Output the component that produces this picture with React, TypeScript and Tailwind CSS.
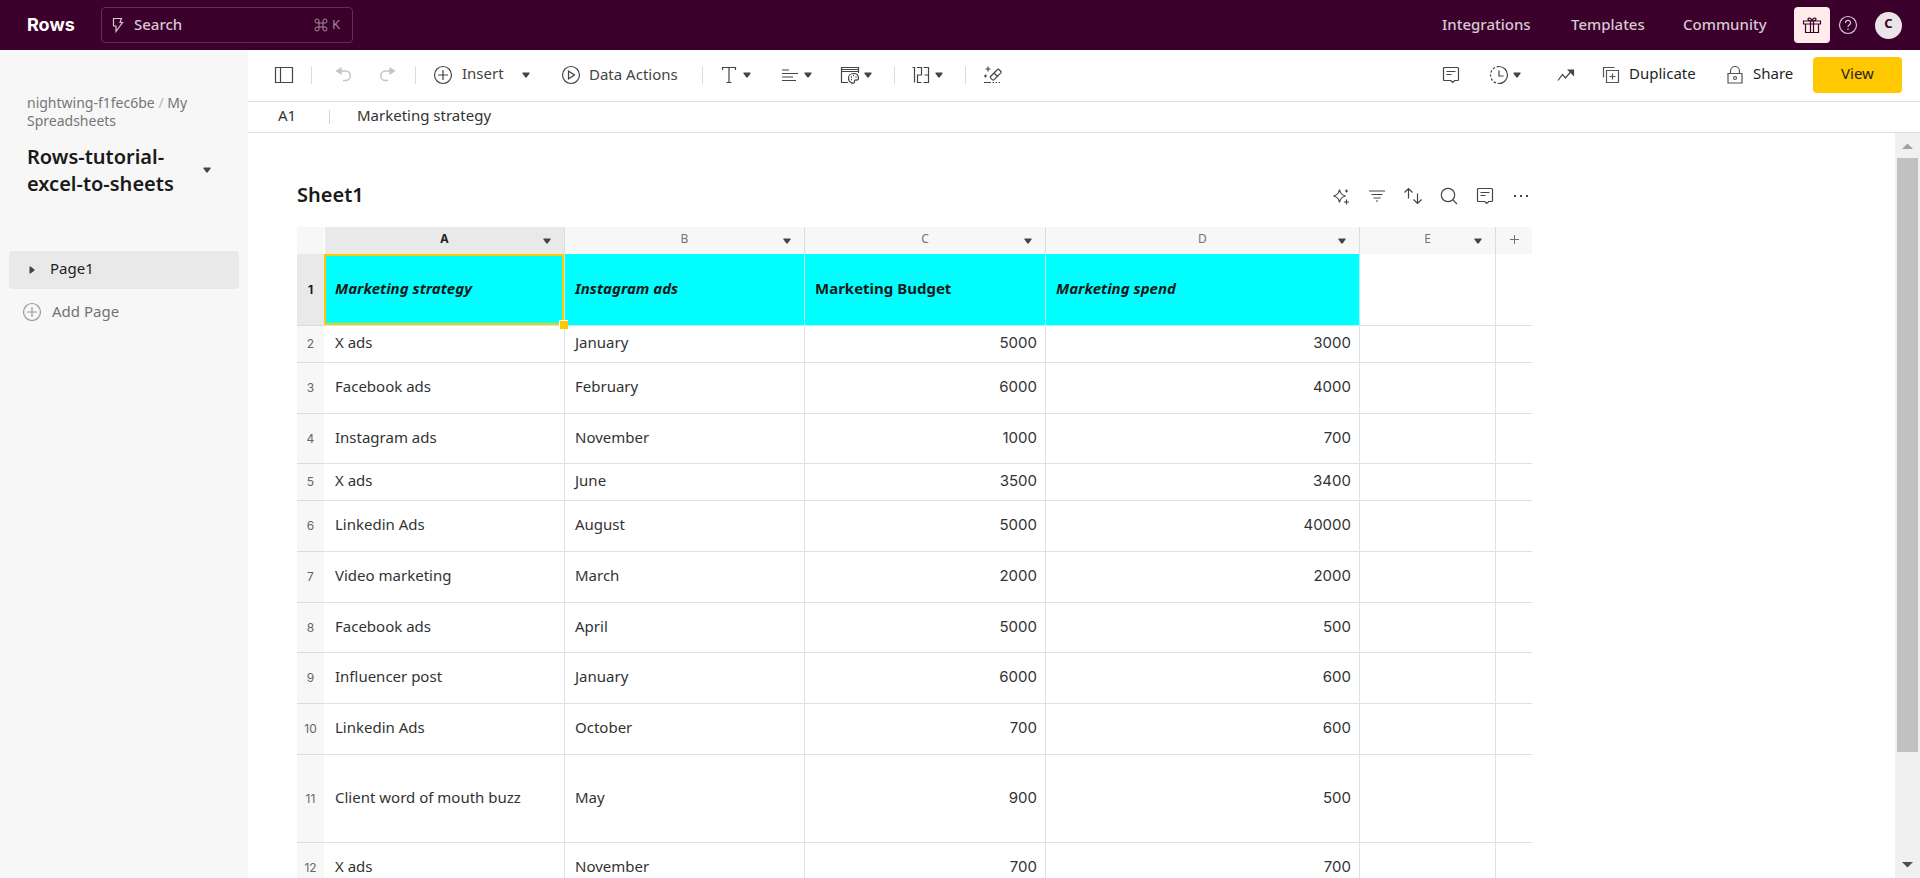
import type { ReactNode } from "react";
import clsx from "clsx";

type Row = {
  height: string;
  cells: [string, string, string, string];
};

const rows: Row[] = [
  { height: "h-[37px]", cells: ["X ads", "January", "5000", "3000"] },
  { height: "h-[51px]", cells: ["Facebook ads", "February", "6000", "4000"] },
  { height: "h-[50px]", cells: ["Instagram ads", "November", "1000", "700"] },
  { height: "h-[37px]", cells: ["X ads", "June", "3500", "3400"] },
  { height: "h-[51px]", cells: ["Linkedin Ads", "August", "5000", "40000"] },
  { height: "h-[51px]", cells: ["Video marketing", "March", "2000", "2000"] },
  { height: "h-[50px]", cells: ["Facebook ads", "April", "5000", "500"] },
  { height: "h-[51px]", cells: ["Influencer post", "January", "6000", "600"] },
  { height: "h-[51px]", cells: ["Linkedin Ads", "October", "700", "600"] },
  {
    height: "h-[88px]",
    cells: ["Client word of mouth buzz", "May", "900", "500"],
  },
  { height: "h-[50px]", cells: ["X ads", "November", "700", "700"] },
];

const columns = ["A", "B", "C", "D", "E"];

function Icon({
  children,
  className,
}: {
  children: ReactNode;
  className?: string;
}) {
  return (
    <svg
      width="20"
      height="20"
      viewBox="0 0 20 20"
      fill="none"
      stroke="currentColor"
      strokeWidth="1.2"
      className={clsx("shrink-0", className)}
      aria-hidden="true"
    >
      {children}
    </svg>
  );
}

function Caret({ className }: { className?: string }) {
  return (
    <svg
      width="8"
      height="6"
      viewBox="0 0 8 6"
      fill="currentColor"
      className={clsx("shrink-0", className)}
      aria-hidden="true"
    >
      <path d="M.5.5h7v1L4.6 5.5H3.4L.5 1.5z" />
    </svg>
  );
}

function PlusCircle({ className }: { className?: string }) {
  return (
    <Icon className={className}>
      <circle cx="10" cy="10" r="8.5" />
      <path d="M10 5v10M5 10h10" />
    </Icon>
  );
}

function CommentIcon() {
  return (
    <Icon>
      <path d="M3.5 2.5h13q1 0 1 1v11q0 1-1 1h-2.8l-2 2-2-2H3.5q-1 0-1-1v-11q0-1 1-1z" />
      <path d="M5.5 6.5h9M5.5 9.5h5" />
    </Icon>
  );
}

function Separator({ className }: { className?: string }) {
  return (
    <div className={clsx("flex shrink-0 justify-center", className)}>
      <span className="h-[18px] w-px bg-[#dcdcdc]" />
    </div>
  );
}

function MenuButton({
  label,
  className,
  children,
}: {
  label: string;
  className: string;
  children: ReactNode;
}) {
  return (
    <button
      aria-label={label}
      className={clsx("flex h-9 shrink-0 items-center gap-1", className)}
    >
      {children}
      <Caret />
    </button>
  );
}

function TopBar() {
  return (
    <header className="flex h-[50px] shrink-0 items-center bg-[#3b002b] pr-[18px] pl-[27px] text-[#d5c8d1]">
      <a
        href="#"
        className="w-[74px] pb-[2px] font-[Inter] text-[18px] font-bold text-white"
      >
        Rows
      </a>
      <label className="flex h-9 w-[252px] items-center rounded-[4px] border border-[#5f3055] pr-3 pl-[6px]">
        <Icon>
          <path d="M5.500 3.500h8l-1.500 4h2.500L8 16.500V11H5.500z" />
        </Icon>
        <input
          type="text"
          placeholder="Search"
          aria-label="Search"
          className="ml-[6px] w-0 flex-1 pb-[2px] text-[15px] font-medium outline-none placeholder:text-[#d5c8d1] placeholder:opacity-100"
        />
        <span className="flex items-center gap-1 pb-px text-[13px] text-[#a3899c]">
          <svg
            width="14"
            height="14"
            viewBox="0 0 14 14"
            fill="none"
            stroke="currentColor"
            aria-hidden="true"
          >
            <path d="M5 5V3a2 2 0 1 0-2 2h8a2 2 0 1 0-2-2v8a2 2 0 1 0 2-2H3a2 2 0 1 0 2 2z" />
          </svg>
          K
        </span>
      </label>

      <nav className="ml-auto flex items-center pb-[2px] text-[15px] font-medium">
        <a href="#" className="w-[129px]">
          Integrations
        </a>
        <a href="#" className="w-28">
          Templates
        </a>
        <a href="#" className="w-[111px]">
          Community
        </a>
      </nav>
      <button
        aria-label="Rewards"
        className="flex size-9 items-center justify-center rounded-[4px] bg-[#ffeceb] text-[#3b002b]"
      >
        <Icon>
          <path d="M1.500 6h17v3h-17zM3.500 9v8.500h13V9M8.500 6v11.500M11.500 6v11.500M10 6C8 6 6 5.500 6 4s3-1.500 4 1.500c1-3 4-3 4-1.500s-2 2-4 2z" />
        </Icon>
      </button>
      <button aria-label="Help" className="ml-2">
        <Icon>
          <circle cx="10" cy="10" r="8.5" />
          <path d="M7.500 8a2.500 2.500 0 1 1 3.700 2.100Q10 10.800 10 12M10 13.500v1.500" />
        </Icon>
      </button>
      <button
        aria-label="Account"
        className="ml-[17px] size-[27px] rounded-full bg-[#ebe5ea] pb-[2px] text-[13px] font-bold text-[#3b002b]"
      >
        C
      </button>
    </header>
  );
}

function Sidebar() {
  return (
    <aside className="w-[248px] shrink-0 bg-[#f7f7f7] pt-[44px]">
      <div className="px-[27px] text-[14px] leading-[18px] text-[#767676]">
        <a href="#">nightwing-f1fec6be</a>
        <span className="text-[#b8b8b8]"> / </span>
        <a href="#">My Spreadsheets</a>
      </div>
      <button className="mt-[13px] flex w-full items-center pr-[37px] pl-[27px] text-left text-[#1a1a1a]">
        <h1 className="flex-1 text-[20px] leading-[27px] font-semibold">
          Rows-tutorial-
          <br />
          excel-to-sheets
        </h1>
        <Caret className="text-[#444]" />
      </button>
      <nav className="mt-[54px] px-[9px] text-[15px]">
        <a
          href="#"
          className="flex h-[38px] items-center rounded-[4px] bg-[#e9e9e9] pl-5 text-[#1f1f1f]"
        >
          <svg
            width="6"
            height="8"
            viewBox="0 0 6 8"
            fill="#444"
            className="mr-[15px]"
            aria-hidden="true"
          >
            <path d="M.5.5h1l4 3v1l-4 3h-1z" />
          </svg>
          <span className="pb-[3px]">Page1</span>
        </a>
        <button className="mt-1 flex h-[38px] items-center gap-[10px] pl-[13px] text-[#737373]">
          <PlusCircle className="text-[#999]" />
          <span className="pb-[2px]">Add Page</span>
        </button>
      </nav>
    </aside>
  );
}

function Toolbar() {
  return (
    <div className="flex h-[52px] shrink-0 items-center border-b border-[#dedede] pr-[18px] pb-[2px] pl-4 text-[15px] text-[#444]">
      <button aria-label="Toggle sidebar" className="flex w-10 justify-center">
        <Icon>
          <path d="M1.500 2.500h17v15h-17zM6.500 2.500v15" />
        </Icon>
      </button>
      <Separator className="w-[15px]" />
      <button
        aria-label="Undo"
        className="flex w-12 justify-center text-[#c4c4c4]"
      >
        <Icon>
          <path d="M5 6h7.500a4.500 4.500 0 0 1 0 9.500H10" strokeWidth="1.5" />
          <path d="M8 3v6L3.500 6z" fill="currentColor" />
        </Icon>
      </button>
      <button
        aria-label="Redo"
        className="flex w-[42px] justify-center text-[#c4c4c4]"
      >
        <Icon>
          <path d="M15 6H7.500a4.500 4.500 0 0 0 0 9.500H10" strokeWidth="1.5" />
          <path d="M12 3v6l4.500-3z" fill="currentColor" />
        </Icon>
      </button>
      <Separator className="w-3" />
      <button className="flex h-9 w-[127px] items-center gap-[9px] pr-[18px] pl-3">
        <PlusCircle />
        <span className="pb-[2px]">Insert</span>
        <Caret className="ml-auto" />
      </button>
      <button className="flex h-9 w-[146px] items-center gap-2 pl-[13px] whitespace-nowrap">
        <Icon>
          <circle cx="10" cy="10" r="8.5" />
          <path d="M7.500 6.200v7.600l6-3.800z" />
        </Icon>
        Data Actions
      </button>
      <Separator className="w-4" />
      <MenuButton label="Text style" className="w-[61px] pl-[9px]">
        <Icon>
          <path d="M3.500 5V2.500h13V5M10 2.500v15M7.500 17.500h5" />
        </Icon>
      </MenuButton>
      <MenuButton label="Alignment" className="w-[60px] pl-[9px]">
        <Icon>
          <path d="M2 5h7M2 8.500h16M2 12h11M2 15.500h14" />
        </Icon>
      </MenuButton>
      <MenuButton label="Cell style" className="w-[55px] pl-[9px]">
        <Icon>
          <path d="M8 17.500H1.500v-15h17V8M1.500 4.500h17M1.500 6.500h17" />
          <path d="M13.500 8.500c3 0 5 2 5 4.700 0 2-2 2-3.200 2-1.300 0-.8 1.200-.8 2.300-1 1.400-6 .3-6-4 0-3 2.200-5 5-5z" />
          <path d="M11 12h1M13 10.500h1M15.500 12h1M11 14.500h1" strokeWidth="1.4" />
        </Icon>
      </MenuButton>
      <Separator className="w-4" />
      <MenuButton label="Number format" className="w-[55px] pl-[9px]">
        <Icon>
          <path d="M1.500 2.500h2v15M6 2.500h4.500V10H6.500v7.500h4M12.500 2.500h5v15h-5M13.500 10h4" />
        </Icon>
      </MenuButton>
      <Separator className="w-4" />
      <button aria-label="Clear format" className="flex w-10 justify-center">
        <Icon>
          <path d="M7.500 11.500l7-7q.7-.6 1.400 0l2 2q.6.700 0 1.400l-7 7q-.7.600-1.400 0l-2-2q-.6-.7 0-1.400zM11 8l3.500 3.500" />
          <path d="M5 1.500v5M2.500 4h5M2.500 9.500v3M1 11h3M1 17.500h7M9.500 17.500H11M12.500 17.500H14M15.500 17.500H17" />
        </Icon>
      </button>

      <button aria-label="Comments" className="ml-auto flex w-12">
        <CommentIcon />
      </button>
      <MenuButton label="History" className="w-[67px]">
        <Icon>
          <path d="M10 1.500a8.500 8.500 0 0 1 0 17" />
          <path
            d="M10 1.500a8.500 8.500 0 0 0 0 17"
            strokeDasharray="2.4 1.8"
          />
          <path d="M10 5.500V11h4.500" />
        </Icon>
      </MenuButton>
      <button aria-label="Insights" className="flex w-[45px]">
        <Icon>
          <path d="M2 15.500l4.500-6 3 3.500L15 6.500" />
          <path d="M12.500 5h5v5z" fill="currentColor" />
        </Icon>
      </button>
      <button className="flex h-9 w-[124px] items-center gap-2 text-[#1f1f1f]">
        <Icon className="text-[#555]">
          <path d="M5.500 5.500h12v12h-12zM2.500 12.500v-10h11M11.500 8.500v6M8.500 11.500h6" />
        </Icon>
        <span className="pb-[2px]">Duplicate</span>
      </button>
      <button className="flex h-9 w-[88px] items-center gap-2 text-[#1f1f1f]">
        <Icon className="text-[#555]">
          <path d="M3 8.500h14v9.500H3zM5.500 8.500V6a4.500 4.500 0 0 1 9 0v2.500" />
          <circle cx="10" cy="13" r="1.5" />
        </Icon>
        <span className="pb-[2px]">Share</span>
      </button>
      <button className="h-9 w-[89px] rounded-[4px] bg-[#ffc800] pb-[2px] text-[#1f1f1f]">
        View
      </button>
    </div>
  );
}

function FormulaBar() {
  return (
    <div className="flex h-[31px] shrink-0 items-center border-b border-[#dedede] pl-[30px] text-[15px] text-[#333]">
      <span className="w-[51px] pb-[3px]">A1</span>
      <span className="h-[14px] w-px bg-[#d4d4d4]" />
      <input
        type="text"
        aria-label="Cell value"
        defaultValue="Marketing strategy"
        className="ml-[27px] min-w-0 flex-1 pb-[3px] outline-none"
      />
    </div>
  );
}

function SheetActions() {
  const button = "flex w-9 justify-center";
  return (
    <div className="flex pt-[2px] text-[#444]">
      <button aria-label="AI analyst" className={button}>
        <Icon>
          <path d="M8.500 3.500q.8 5.200 6 6.500-5.200 1.300-6 6.500-.8-5.200-6-6.500 5.200-1.300 6-6.500z" />
          <path d="M15.500 3.500v3M14 5h3M15.500 13.500v5M13 16h5" />
        </Icon>
      </button>
      <button aria-label="Filter" className={button}>
        <Icon>
          <path d="M2 5h16M4.500 8.500h11M6.500 12h7M9 15h2" />
        </Icon>
      </button>
      <button aria-label="Sort" className={button}>
        <Icon>
          <path d="M5.500 12.500V2.500M1.500 6.500l4-4 4 4M14.500 7.500v10M10.500 13.500l4 4 4-4" />
        </Icon>
      </button>
      <button aria-label="Search sheet" className={button}>
        <Icon>
          <circle cx="9" cy="9" r="6.7" />
          <path d="M13.800 13.800L18 18" />
        </Icon>
      </button>
      <button aria-label="Comment" className={button}>
        <CommentIcon />
      </button>
      <button aria-label="More" className={button}>
        <Icon>
          <path d="M3 10h2M9 10h2M15 10h2" strokeWidth="2" />
        </Icon>
      </button>
    </div>
  );
}

function SheetTable() {
  const line = "border-r border-b border-[#e0e0e0]";
  const cyan =
    "relative border-r border-b border-r-[#b5f0f0] border-b-[#b5f0f0] bg-[#00ffff] pt-0 pr-2 pb-[2px] pl-[10px] text-left font-bold";

  return (
    <table className="w-[1235px] table-fixed border-separate border-spacing-0 text-[15px] text-[#333]">
      <colgroup>
        <col className="w-7" />
        <col className="w-[240px]" />
        <col className="w-[240px]" />
        <col className="w-[241px]" />
        <col className="w-[314px]" />
        <col className="w-[136px]" />
        <col className="w-9" />
      </colgroup>
      <thead>
        <tr className="h-[27px] bg-[#f7f7f7] text-[12px] text-[#737373]">
          <td className="border-r border-white" />
          {columns.map((name) => (
            <th
              key={name}
              scope="col"
              className={clsx(
                "border-r border-[#dcdcdc] p-0",
                name === "A"
                  ? "bg-[#e9e9e9] font-bold text-[#1f1f1f]"
                  : "font-normal",
              )}
            >
              <button className="flex w-full items-center pr-[13px] pl-[21px]">
                <span className="flex-1 pb-[3px]">{name}</span>
                <Caret className="text-[#444]" />
              </button>
            </th>
          ))}
          <td className="p-0 pb-[2px]">
            <button
              aria-label="Add column"
              className="flex w-full justify-center"
            >
              <svg
                width="9"
                height="9"
                viewBox="0 0 9 9"
                stroke="currentColor"
                aria-hidden="true"
              >
                <path d="M4.500 0v9M0 4.500h9" />
              </svg>
            </button>
          </td>
        </tr>
      </thead>
      <tbody>
        <tr className="h-[72px] text-[#1a1a1a]">
          <th
            scope="row"
            className="border-r border-b border-r-white border-b-[#dcdcdc] bg-[#e9e9e9] p-0 font-[Inter] text-[12px] font-bold"
          >
            1
          </th>
          <td className={clsx(cyan, "italic")}>
            Marketing strategy
            <span className="absolute inset-y-0 right-0 -left-px border-2 border-[#ffc800]" />
            <span className="absolute -right-1 -bottom-1 z-10 size-[9px] border-t border-l border-white bg-[#ffc800]" />
          </td>
          <td className={clsx(cyan, "italic")}>Instagram ads</td>
          <td className={cyan}>Marketing Budget</td>
          <td className={clsx(cyan, "italic")}>Marketing spend</td>
          <td className={line} />
          <td className="border-b border-[#e0e0e0]" />
        </tr>
        {rows.map((row, index) => (
          <tr key={index} className={row.height}>
            <th
              scope="row"
              className="border-r border-b border-r-white border-b-[#dcdcdc] bg-[#f7f7f7] p-0 font-[Inter] text-[12px] font-normal text-[#666]"
            >
              {index + 2}
            </th>
            {row.cells.map((value, i) => (
              <td
                key={i}
                className={clsx(
                  line,
                  "pt-0",
                  i > 1
                    ? "pr-2 pb-px text-right font-[Inter]"
                    : "pb-[3px] pl-[10px]",
                )}
              >
                {value}
              </td>
            ))}
            <td className={line} />
            <td className="border-b border-[#e0e0e0]" />
          </tr>
        ))}
      </tbody>
    </table>
  );
}

function ScrollTrack() {
  return (
    <div
      aria-hidden="true"
      className="flex w-[25px] shrink-0 flex-col items-center bg-[#f0f0f0]"
    >
      <svg width="25" height="25" viewBox="0 0 25 25" fill="#a0a0a0">
        <path d="M7 16h11l-5.500-5.500z" />
      </svg>
      <div className="w-[21px] flex-[594] bg-[#c1c1c1]" />
      <div className="flex-[101]" />
      <svg width="25" height="25" viewBox="0 0 25 25" fill="#505050">
        <path d="M7 9h11l-5.500 5.500z" />
      </svg>
    </div>
  );
}

export default function App() {
  return (
    <div className="flex h-screen flex-col overflow-hidden bg-white font-['Noto_Sans',sans-serif]">
      <TopBar />
      <div className="flex min-h-0 flex-1">
        <Sidebar />
        <main className="flex min-w-0 flex-1 flex-col">
          <Toolbar />
          <FormulaBar />
          <div className="flex min-h-0 flex-1">
            <section className="min-w-0 flex-1 overflow-hidden pt-[44px] pl-[49px]">
              <div className="flex h-9 w-[1242px] items-center justify-between">
                <h2 className="text-[20px] font-semibold text-[#1a1a1a]">
                  Sheet1
                </h2>
                <SheetActions />
              </div>
              <div className="mt-[14px]">
                <SheetTable />
              </div>
            </section>
            <ScrollTrack />
          </div>
        </main>
      </div>
    </div>
  );
}
